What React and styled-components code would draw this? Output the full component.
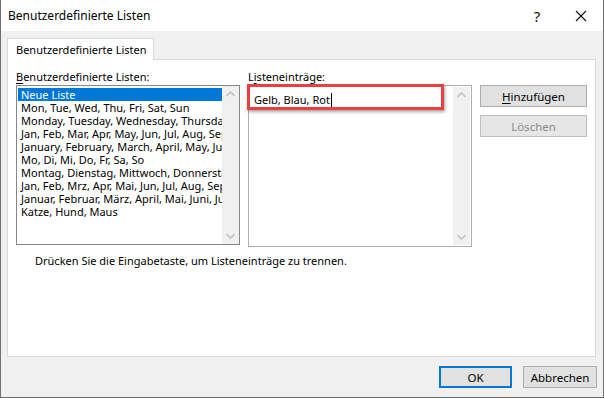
import React from "react";
import styled, { createGlobalStyle } from "styled-components";

const GlobalStyle = createGlobalStyle`
  html, body {
    margin: 0;
    padding: 0;
    background: #ffffff;
  }
  body {
    font-family: "Noto Sans", "Open Sans", sans-serif;
    font-size: 11px;
    color: #000000;
  }
`;

const Window = styled.div`
  width: 604px;
  height: 398px;
  box-sizing: border-box;
  border: 1px solid #6f6f6f;
  border-top: none;
  background: #f0f0f0;
  display: flex;
  flex-direction: column;
`;

const TitleBar = styled.div`
  height: 31px;
  background: #ffffff;
  display: flex;
  align-items: center;
  padding-left: 7px;
`;

const Title = styled.div`
  flex: 1;
  font-size: 12px;
`;

const TitleButton = styled.div`
  width: 44px;
  height: 31px;
  display: flex;
  align-items: center;
  justify-content: center;
  font-size: 15px;
  color: #111;
`;

const Body = styled.div`
  flex: 1;
  display: flex;
  flex-direction: column;
  padding: 7px 7px 0 6px;
`;

const TabStrip = styled.div`
  display: flex;
  height: 21px;
`;

const Tab = styled.div`
  position: relative;
  z-index: 1;
  background: #ffffff;
  border: 1px solid #d9d9d9;
  border-bottom: none;
  width: 147px;
  height: 22px;
  box-sizing: border-box;
  padding: 0 0 0 8px;
  display: flex;
  align-items: center;
`;

const Panel = styled.div`
  height: 298px;
  box-sizing: border-box;
  background: #ffffff;
  border: 1px solid #d9d9d9;
  padding: 9px 0 0 8px;
  display: flex;
  flex-direction: column;
`;

const Columns = styled.div`
  display: grid;
  grid-template-columns: 224px 224px 107px;
  column-gap: 8px;
  align-items: start;
`;

const Field = styled.div`
  display: flex;
  flex-direction: column;
`;

const Label = styled.div`
  height: 16px;
  line-height: 16px;
`;

const Key = styled.span`
  text-decoration: underline;
  text-underline-offset: 2px;
`;

const ListBox = styled.div`
  position: relative;
  height: ${p => p.h}px;
  box-sizing: border-box;
  border: 1px solid ${p => p.border};
  background: #ffffff;
  display: flex;
`;

const Items = styled.div`
  flex: 1;
  min-width: 0;
  padding: 2px 0 0 1px;
  overflow: hidden;
`;

const Item = styled.div`
  height: 13px;
  line-height: 13px;
  padding-left: 3px;
  white-space: nowrap;
  background: ${p => (p.selected ? "#0078d7" : "transparent")};
  color: ${p => (p.selected ? "#ffffff" : "#000000")};
`;

const EntryText = styled.div`
  padding: 5px 0 0 4px;
  line-height: 14px;
  white-space: nowrap;
`;

const Caret = styled.span`
  display: inline-block;
  width: 1px;
  height: 14px;
  background: #000;
  vertical-align: -3px;
  margin-left: 1px;
`;

const ScrollBar = styled.div`
  width: 17px;
  background: #f0f0f0;
  display: flex;
  flex-direction: column;
  justify-content: space-between;
  align-items: center;
  padding: 5px 0;
  box-sizing: border-box;
  margin: ${p => (p.inset ? "1px 1px 1px 0" : "0")};
`;

const Highlight = styled.div`
  position: absolute;
  left: -2px;
  top: -2px;
  width: 197px;
  height: 26px;
  box-sizing: border-box;
  border: 3px solid #ea3f3f;
  box-shadow: 1px 2px 3px rgba(0, 0, 0, 0.35);
  pointer-events: none;
`;

const Buttons = styled.div`
  display: flex;
  flex-direction: column;
  gap: 8px;
  padding-top: 16px;
`;

const Button = styled.div`
  height: 22px;
  box-sizing: border-box;
  border: ${p => (p.primary ? "2px solid #0078d7" : `1px solid ${p.disabled ? "#bfbfbf" : "#adadad"}`)};
  background: ${p => (p.disabled ? "#e6e6e6" : "#e1e1e1")};
  color: ${p => (p.disabled ? "#8b8b8b" : "#000000")};
  display: flex;
  align-items: center;
  justify-content: center;
  width: ${p => (p.w ? `${p.w}px` : "auto")};
  font-size: 11.5px;
`;

const Hint = styled.div`
  margin: 6px 0 0 19px;
`;

const Footer = styled.div`
  flex: 1;
  display: flex;
  justify-content: flex-end;
  align-items: flex-start;
  gap: 11px;
  padding: 9px 0 0 0;
  margin-right: -1px;
`;

const Chevron = ({ up }) => (
  <svg width="9" height="6" viewBox="0 0 9 6">
    <path
      d={up ? "M0.5 5 L4.5 1 L8.5 5" : "M0.5 1 L4.5 5 L8.5 1"}
      fill="none"
      stroke="#c2c2c2"
      strokeWidth="1.6"
    />
  </svg>
);

const CloseIcon = () => (
  <svg width="12" height="12" viewBox="0 0 12 12">
    <path d="M1 1 L11 11 M11 1 L1 11" stroke="#111" strokeWidth="1.1" />
  </svg>
);

const lists = [
  "Mon, Tue, Wed, Thu, Fri, Sat, Sun",
  "Monday, Tuesday, Wednesday, Thursday, Friday, Saturday, Sunday",
  "Jan, Feb, Mar, Apr, May, Jun, Jul, Aug, Sep, Oct, Nov, Dec",
  "January, February, March, April, May, June, July, August",
  "Mo, Di, Mi, Do, Fr, Sa, So",
  "Montag, Dienstag, Mittwoch, Donnerstag, Freitag, Samstag, Sonntag",
  "Jan, Feb, Mrz, Apr, Mai, Jun, Jul, Aug, Sep, Okt, Nov, Dez",
  "Januar, Februar, März, April, Mai, Juni, Juli, August",
  "Katze, Hund, Maus",
];

const App = () => {
  return (
    <>
      <GlobalStyle />
      <Window>
        <TitleBar>
          <Title>Benutzerdefinierte Listen</Title>
          <TitleButton>?</TitleButton>
          <TitleButton>
            <CloseIcon />
          </TitleButton>
        </TitleBar>

        <Body>
          <TabStrip>
            <Tab>Benutzerdefinierte Listen</Tab>
          </TabStrip>
          <Panel>
            <Columns>
              <Field>
                <Label>
                  <Key>B</Key>enutzerdefinierte Listen:
                </Label>
                <ListBox h={160} border="#828790">
                  <Items>
                    <Item selected>Neue Liste</Item>
                    {lists.map(l => (
                      <Item key={l}>{l}</Item>
                    ))}
                  </Items>
                  <ScrollBar>
                    <Chevron up />
                    <Chevron />
                  </ScrollBar>
                </ListBox>
              </Field>

              <Field>
                <Label>
                  L<Key>i</Key>steneinträge:
                </Label>
                <ListBox h={162} border="#abadb3">
                  <Items>
                    <EntryText>
                      Gelb, Blau, Rot
                      <Caret />
                    </EntryText>
                  </Items>
                  <ScrollBar inset>
                    <Chevron up />
                    <Chevron />
                  </ScrollBar>
                  <Highlight />
                </ListBox>
              </Field>

              <Buttons>
                <Button>
                  <span>
                    <Key>H</Key>inzufügen
                  </span>
                </Button>
                <Button disabled>Löschen</Button>
              </Buttons>
            </Columns>
            <Hint>Drücken Sie die Eingabetaste, um Listeneinträge zu trennen.</Hint>
          </Panel>

          <Footer>
            <Button primary w={73}>
              OK
            </Button>
            <Button w={74}>Abbrechen</Button>
          </Footer>
        </Body>
      </Window>
    </>
  );
};

export default App;
